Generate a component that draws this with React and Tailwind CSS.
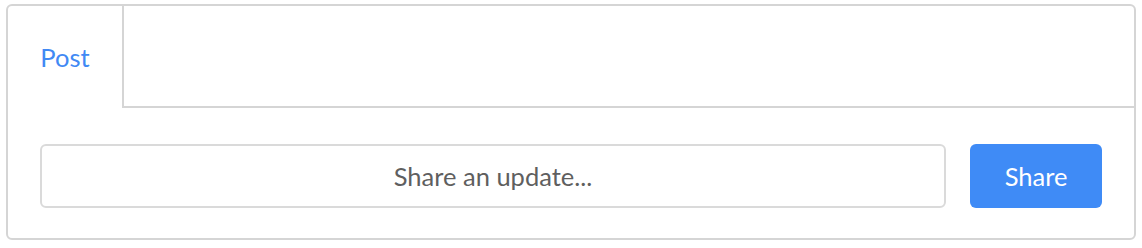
import React from 'react';

const App = () => {
    return (
        <div className="px-[6px] pt-[4px]" style={{ fontFamily: 'Lato, "Noto Sans", sans-serif' }}>
            <div className="w-[1130px] border-2 border-[#d5d5d5] rounded-[6px] bg-white">
                {/* Tabs */}
                <div className="flex h-[102px]">
                    <div className="w-[116px] border-r-2 border-[#d5d5d5] flex items-center justify-center">
                        <span className="text-[25.5px] text-[#4189f4]">Post</span>
                    </div>
                    <div className="flex-1 border-b-2 border-[#d5d5d5]" />
                </div>

                {/* Composer */}
                <div className="flex gap-[24px] pl-[32px] pr-[32px] pt-[36px] pb-[30px]">
                    <input
                        type="text"
                        placeholder="Share an update..."
                        className="flex-1 h-[64px] border-2 border-[#dadada] rounded-[6px] text-center text-[25.5px] text-[#555] placeholder:text-[#5f5f5f] outline-none"
                    />
                    <button className="w-[132px] h-[64px] rounded-[6px] bg-[#3f8bf6] text-white text-[25.5px]">
                        Share
                    </button>
                </div>
            </div>
        </div>
    );
};

export default App;
